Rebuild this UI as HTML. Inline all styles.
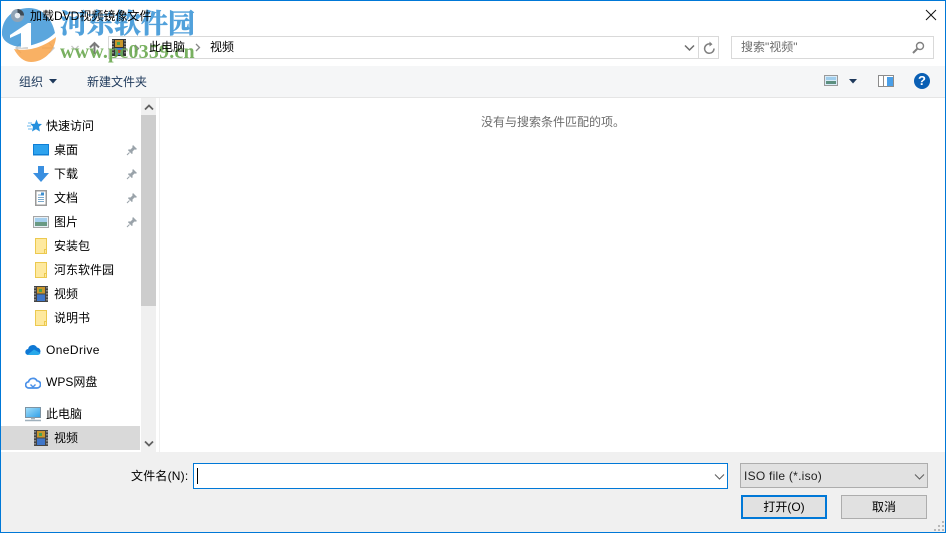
<!DOCTYPE html>
<html lang="zh">
<head>
<meta charset="utf-8">
<title>加载DVD视频镜像文件</title>
<style>
html,body{margin:0;padding:0;width:946px;height:533px;overflow:hidden;background:#fff}
body{position:relative;font:12px/16px "Liberation Sans","WenQuanYi Zen Hei","Noto Sans CJK SC",sans-serif;color:#000}
.a{position:absolute}
.t{position:absolute;white-space:nowrap;line-height:16px}
svg{position:absolute;display:block}
.box{position:absolute;box-sizing:border-box}
</style>
</head>
<body>
<!-- toolbar -->
<div class="a" style="left:1px;top:66px;width:944px;height:31px;background:#f5f6f7"></div>
<div class="a" style="left:1px;top:97px;width:944px;height:1px;background:#e5e5e5"></div>

<!-- bottom panel -->
<div class="a" style="left:1px;top:452px;width:944px;height:80px;background:#f0f0f0"></div>

<!-- nav arrows -->
<svg style="left:14px;top:41px" width="44" height="14" viewBox="0 0 44 14"><path d="M2 7h12M7 2L2 7l5 5" stroke="#c9c9c9" stroke-width="1.400" fill="none"/><path d="M28 7h12M35 2l5 5-5 5" stroke="#c9c9c9" stroke-width="1.400" fill="none"/></svg>
<svg style="left:70px;top:44px" width="10" height="8" viewBox="0 0 10 8"><path d="M1.500 2l3.500 3.500L8.500 2" stroke="#c4c4c4" stroke-width="1.300" fill="none"/></svg>
<svg style="left:88px;top:41px" width="13" height="14" viewBox="0 0 13 14"><path d="M6.500 13V2M2 6.500L6.500 2 11 6.500" stroke="#7a7a7a" stroke-width="2" fill="none"/></svg>

<!-- address bar -->
<div class="box" style="left:108px;top:36px;width:611px;height:23px;border:1px solid #d9d9d9;background:#fff"></div>
<div class="a" style="left:698px;top:37px;width:1px;height:21px;background:#d9d9d9"></div>
<svg style="left:112px;top:39px" width="14" height="17" viewBox="0 0 14 17"><rect width="14" height="17" fill="#333"/><rect x="3" y="1" width="8" height="7" fill="#c9962c"/><rect x="3" y="9" width="8" height="7" fill="#3f76c9"/><rect x="5" y="3" width="3" height="3" fill="#49a050"/><rect x="6" y="11" width="3" height="3" fill="#c2482f"/><path d="M1 1v15M13 1v15" stroke="#ccc" stroke-width="1" stroke-dasharray="1.500 1.500"/></svg>
<svg style="left:134px;top:44px" width="6" height="9" viewBox="0 0 6 9"><path d="M1 1l3.500 3.500L1 8" stroke="#888" stroke-width="1.300" fill="none"/></svg>
<svg style="left:195px;top:43px" width="6" height="9" viewBox="0 0 6 9"><path d="M1 1l3.500 3.500L1 8" stroke="#888" stroke-width="1.300" fill="none"/></svg>
<div class="t" style="left:210px;top:39px">视频</div>
<svg style="left:684px;top:44px" width="11" height="8" viewBox="0 0 11 8"><path d="M1 1.500l4.500 4.500L10 1.500" stroke="#6d6d6d" stroke-width="1.500" fill="none"/></svg>
<svg style="left:703px;top:41px" width="13" height="14" viewBox="0 0 13 14"><path d="M8 3.200A4.700 4.700 0 1 0 11 7.500" stroke="#808080" stroke-width="1.500" fill="none"/><path d="M6.500 0.500L9.500 3.300 6.500 5.500z" fill="#808080"/></svg>

<!-- search -->
<div class="box" style="left:731px;top:36px;width:203px;height:23px;border:1px solid #d9d9d9;background:#fff"></div>
<div class="t" style="left:741px;top:39px;color:#6d6d6d">搜索"视频"</div>
<svg style="left:912px;top:41px" width="13" height="13" viewBox="0 0 13 13"><circle cx="8" cy="5" r="3.500" stroke="#808080" stroke-width="1.400" fill="none"/><path d="M5.500 7.500L1 12" stroke="#808080" stroke-width="2"/></svg>

<!-- toolbar contents -->
<div class="t" style="left:19px;top:74px;color:#1e395b">组织</div>
<svg style="left:49px;top:79px" width="8" height="5" viewBox="0 0 8 5"><path d="M0 0h8L4 4.500z" fill="#1e395b"/></svg>
<div class="t" style="left:87px;top:74px;color:#1e395b">新建文件夹</div>

<svg style="left:824px;top:75px" width="14" height="11" viewBox="0 0 14 11"><rect x=".5" y=".5" width="13" height="10" fill="#d8ebf8" stroke="#9a9a9a"/><rect x="2" y="6" width="10" height="3" fill="#5d9080"/><rect x="2" y="2" width="10" height="3" fill="#9fcdec"/></svg>
<svg style="left:849px;top:79px" width="8" height="5" viewBox="0 0 8 5"><path d="M0 0h8L4 4.500z" fill="#1e395b"/></svg>
<svg style="left:878px;top:75px" width="16" height="12" viewBox="0 0 16 12"><rect x=".5" y=".5" width="15" height="11" fill="#fff" stroke="#8c8c8c"/><rect x="9" y="2" width="6" height="9" fill="#4a9fe8"/><path d="M5.500 1v10" stroke="#8c8c8c"/></svg>
<div class="a" style="left:914px;top:73px;width:16px;height:16px;border-radius:50%;background:#0a5fb4;color:#fff;font:bold 13px/16px 'Liberation Sans',sans-serif;text-align:center">?</div>

<!-- navigation pane -->
<div class="a" style="left:1px;top:426px;width:139px;height:24px;background:#d9d9d9"></div>

<svg style="left:27px;top:119px" width="15" height="14" viewBox="0 0 15 14"><path d="M9.500 0.500l1.700 4.200 3.800.3-3 2.800.9 4.700-3.900-2.300-4 2.300 1-4.700L3.500 5l4.300-.3z" fill="#2590de"/><path d="M1 4h4M0 7h4M1 10h4" stroke="#6db8ec"/></svg>
<div class="t" style="left:46px;top:118px">快速访问</div>

<svg style="left:33px;top:144px" width="16" height="12" viewBox="0 0 16 12"><rect width="16" height="11" fill="#0f7fd6"/><rect x="1" y="1" width="14" height="9" fill="#2ea3ee"/><rect x="0" y="11" width="16" height="1" fill="#8cbfe6"/></svg>
<div class="t" style="left:54px;top:142px">桌面</div>
<svg style="left:33px;top:166px" width="16" height="16" viewBox="0 0 16 16"><path d="M5 0h6v7h5l-8 9-8-9h5z" fill="#3a8fe0"/></svg>
<div class="t" style="left:54px;top:166px">下载</div>
<svg style="left:35px;top:190px" width="12" height="16" viewBox="0 0 12 16"><rect x=".75" y=".75" width="10.500" height="14.500" fill="#fff" stroke="#9a9a9a" stroke-width="1.500"/><path d="M3 5h3M3 7.500h6M3 9.500h6M3 11.500h6" stroke="#7aa9cc"/><path d="M6 2.500h3v3H6z" fill="#3d8fd0"/></svg>
<div class="t" style="left:54px;top:190px">文档</div>
<svg style="left:33px;top:216px" width="16" height="12" viewBox="0 0 16 12"><rect x=".5" y=".5" width="15" height="11" fill="#e8f0f6" stroke="#a5a5a5"/><rect x="2" y="2" width="12" height="4" fill="#a5cfee"/><rect x="2" y="6" width="12" height="4" fill="#6a9a84"/></svg>
<div class="t" style="left:54px;top:214px">图片</div>

<svg style="left:126px;top:144px" width="12" height="12" viewBox="0 0 12 12"><path d="M7 1l4 4-1 .6-1.500-.1L6.500 7.500 6.600 9.500 5.800 10 2 6.200l.5-.8 2 .1 2-2L6.400 2z" fill="#9aa3aa"/><path d="M3.500 8.500L1 11" stroke="#9aa3aa"/></svg>
<svg style="left:126px;top:168px" width="12" height="12" viewBox="0 0 12 12"><path d="M7 1l4 4-1 .6-1.500-.1L6.500 7.500 6.600 9.500 5.800 10 2 6.200l.5-.8 2 .1 2-2L6.400 2z" fill="#9aa3aa"/><path d="M3.500 8.500L1 11" stroke="#9aa3aa"/></svg>
<svg style="left:126px;top:192px" width="12" height="12" viewBox="0 0 12 12"><path d="M7 1l4 4-1 .6-1.500-.1L6.500 7.500 6.600 9.500 5.800 10 2 6.200l.5-.8 2 .1 2-2L6.400 2z" fill="#9aa3aa"/><path d="M3.500 8.500L1 11" stroke="#9aa3aa"/></svg>
<svg style="left:126px;top:216px" width="12" height="12" viewBox="0 0 12 12"><path d="M7 1l4 4-1 .6-1.500-.1L6.500 7.500 6.600 9.500 5.800 10 2 6.200l.5-.8 2 .1 2-2L6.400 2z" fill="#9aa3aa"/><path d="M3.500 8.500L1 11" stroke="#9aa3aa"/></svg>

<svg style="left:35px;top:238px" width="13" height="16" viewBox="0 0 13 16"><path d="M.5.500h11v15H.5z" fill="#fee99f" stroke="#ecc94f"/><path d="M9.500 15.500v-4h2.500" fill="none" stroke="#ecc94f"/></svg>
<div class="t" style="left:54px;top:238px">安装包</div>
<svg style="left:35px;top:262px" width="13" height="16" viewBox="0 0 13 16"><path d="M.5.500h11v15H.5z" fill="#fee99f" stroke="#ecc94f"/><path d="M9.500 15.500v-4h2.500" fill="none" stroke="#ecc94f"/></svg>
<div class="t" style="left:54px;top:262px">河东软件园</div>
<svg style="left:34px;top:286px" width="14" height="16" viewBox="0 0 14 16"><rect width="14" height="16" fill="#444"/><rect x="3" y="1" width="8" height="6.500" fill="#c9962c"/><rect x="3" y="8.500" width="8" height="6.500" fill="#3f76c9"/><rect x="5" y="3" width="3" height="3" fill="#49a050"/><path d="M1 1v14M13 1v14" stroke="#ccc" stroke-dasharray="1.500 1.500"/></svg>
<div class="t" style="left:54px;top:286px">视频</div>
<svg style="left:35px;top:310px" width="13" height="16" viewBox="0 0 13 16"><path d="M.5.500h11v15H.5z" fill="#fee99f" stroke="#ecc94f"/><path d="M9.500 15.500v-4h2.500" fill="none" stroke="#ecc94f"/></svg>
<div class="t" style="left:54px;top:310px">说明书</div>

<svg style="left:25px;top:344px" width="16" height="11" viewBox="0 0 16 11"><path d="M3.500 11a3 3 0 0 1-.4-6A4.800 4.800 0 0 1 12 3.500a3.800 3.800 0 0 1 .5 7.500z" fill="#0f78d4"/><path d="M3.500 11a3 3 0 0 1-1-.2L9 5.500l6.500 3.800a3.500 3.500 0 0 1-3 1.700z" fill="#28a8ea"/></svg>
<div class="t" style="left:46px;top:342px;letter-spacing:.4px">OneDrive</div>
<svg style="left:25px;top:375px" width="16" height="14" viewBox="0 0 16 14"><path d="M4 13a3 3 0 0 1-.5-6.200A4.600 4.600 0 0 1 12 5.800 3.600 3.600 0 0 1 12 13z" fill="#fff" stroke="#4a90e8" stroke-width="1.700"/><path d="M5.500 9.500L8 12l2.500-2.500" stroke="#4a90e8" stroke-width="1.400" fill="none"/></svg>
<div class="t" style="left:46px;top:374px">WPS网盘</div>
<svg style="left:25px;top:407px" width="16" height="15" viewBox="0 0 16 15"><defs><linearGradient id="m" x1="0" y1="0" x2="1" y2="1"><stop offset="0" stop-color="#a5e0fa"/><stop offset="1" stop-color="#2f9fe8"/></linearGradient></defs><rect x=".5" y=".5" width="15" height="10" fill="url(#m)" stroke="#7d93a3"/><path d="M6 11.500h4M0 13.500h16" stroke="#9fb0bc" stroke-width="1.500"/></svg>
<div class="t" style="left:46px;top:406px">此电脑</div>
<svg style="left:34px;top:430px" width="14" height="16" viewBox="0 0 14 16"><rect width="14" height="16" fill="#444"/><rect x="3" y="1" width="8" height="6.500" fill="#c9962c"/><rect x="3" y="8.500" width="8" height="6.500" fill="#3f76c9"/><rect x="5" y="3" width="3" height="3" fill="#49a050"/><path d="M1 1v14M13 1v14" stroke="#ccc" stroke-dasharray="1.500 1.500"/></svg>
<div class="t" style="left:54px;top:430px">视频</div>

<!-- scrollbar -->
<div class="a" style="left:141px;top:98px;width:15px;height:354px;background:#f0f0f0"></div>
<div class="a" style="left:141px;top:115px;width:15px;height:191px;background:#cdcdcd"></div>
<svg style="left:144px;top:104px" width="10" height="7" viewBox="0 0 10 7"><path d="M1 5.500l4-4 4 4" stroke="#606060" stroke-width="1.800" fill="none"/></svg>
<svg style="left:144px;top:440px" width="10" height="7" viewBox="0 0 10 7"><path d="M1 1.500l4 4 4-4" stroke="#606060" stroke-width="1.800" fill="none"/></svg>
<div class="a" style="left:159px;top:98px;width:1px;height:354px;background:#f0f0f0"></div>

<!-- empty message -->
<div class="t" style="left:481px;top:114px;color:#6d6d6d">没有与搜索条件匹配的项。</div>

<!-- bottom controls -->
<div class="t" style="left:131px;top:468px;letter-spacing:.2px">文件名(N):</div>
<div class="box" style="left:193px;top:463px;width:535px;height:26px;border:1px solid #0078d7;background:#fff"></div>
<div class="a" style="left:197px;top:468px;width:1px;height:16px;background:#000"></div>
<svg style="left:714px;top:474px" width="11" height="6" viewBox="0 0 11 6"><path d="M1 .5l4.500 4.500L10 .5" stroke="#606060" stroke-width="1.100" fill="none"/></svg>

<div class="box" style="left:740px;top:463px;width:188px;height:25px;border:1px solid #adadad;background:#e1e1e1"></div>
<div class="t" style="left:744px;top:468px;letter-spacing:.25px;color:#222">ISO file (*.iso)</div>
<svg style="left:914px;top:474px" width="11" height="6" viewBox="0 0 11 6"><path d="M1 .5l4.500 4.500L10 .5" stroke="#606060" stroke-width="1.100" fill="none"/></svg>

<div class="box" style="left:741px;top:495px;width:86px;height:24px;border:2px solid #0078d7;background:#e1e1e1;text-align:center;line-height:20px">打开(O)</div>
<div class="box" style="left:841px;top:495px;width:86px;height:24px;border:1px solid #adadad;background:#e1e1e1;text-align:center;line-height:22px">取消</div>

<svg style="left:933px;top:520px" width="12" height="12" viewBox="0 0 12 12"><path d="M9 1h2v2H9zM5 5h2v2H5zM9 5h2v2H9zM1 9h2v2H1zM5 9h2v2H5zM9 9h2v2H9z" fill="#b8b8b8"/></svg>

<!-- watermark -->
<svg style="left:0;top:0;z-index:5;opacity:.85" width="60" height="66" viewBox="0 0 60 66">
<path d="M2 35C1 18 14 8 29 8c13 0 23 10 26 25-6 6-14 10-27 13-6 1-12 1-16-1-5-2-9-5-10-10z" fill="#3f97d8"/>
<path d="M10 35l18-12h3v23l-10 2V33l-11 5z" fill="#fff"/>
<path d="M14 49c16 3 31-3 42-12-1 14-12 25-25 25-7 0-13-5-17-13z" fill="#f9a44a"/>
</svg>
<div class="t" style="left:60px;top:9px;z-index:5;font:bold 27px/30px 'Liberation Serif','Noto Serif CJK SC',serif;color:#3f97d8;opacity:.9;-webkit-text-stroke:.6px #3f97d8">河东软件园</div>
<div class="t" style="left:60px;top:42px;z-index:5;font:bold 20px/20px 'Liberation Serif',serif;color:#6aa84f;opacity:.9;letter-spacing:.2px">www.pc0359.cn</div>

<!-- title (above the watermark) -->
<svg style="left:10px;top:8px;z-index:6" width="15" height="15" viewBox="0 0 16 16"><circle cx="8" cy="8" r="7" fill="#8fa3b5"/><circle cx="8" cy="8" r="3" fill="#e8eef3"/><path d="M8 1a7 7 0 0 1 7 7h-4a3 3 0 0 0-3-3z" fill="#3d4a55"/></svg>
<div class="t" style="left:30px;top:8px;color:#000;z-index:6">加载DVD视频镜像文件</div>
<div class="t" style="left:149px;top:39px;z-index:6">此电脑</div>

<!-- close -->
<svg style="left:925px;top:9px" width="12" height="12" viewBox="0 0 12 12"><path d="M1 1l10 10M11 1L1 11" stroke="#111" stroke-width="1" fill="none"/></svg>

<!-- window frame -->
<div class="box" style="left:0;top:0;width:946px;height:533px;border:1px solid #0078d7;z-index:20;pointer-events:none"></div>
</body>
</html>
